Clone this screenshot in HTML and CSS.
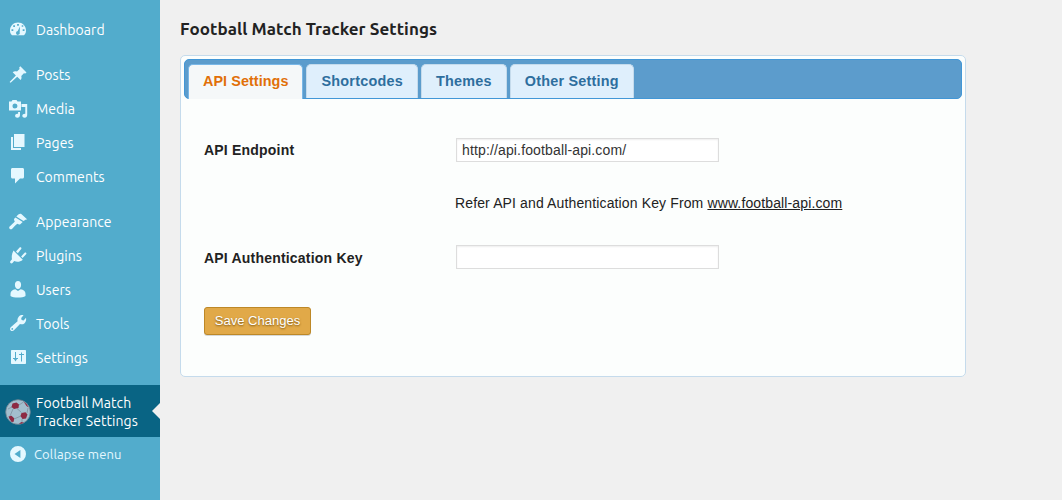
FILE: index.html
```html
<!DOCTYPE html>
<html lang="en">
<head>
  <meta charset="UTF-8" />
  <title>Football Match Tracker Settings</title>
  <link rel="stylesheet" href="styles.css">
</head>
<body>
  <div class="wrapper">
    <nav class="sidebar">
      <ul class="menu">
        <li><a href="#">
          <svg class="icon" viewBox="0 0 20 20"><path fill-rule="evenodd" d="M4 15.2C2.700 14 2 12.500 2 10.500 2 6 5.500 2.500 10 2.500s8 3.500 8 8c0 2-.7 3.500-2 4.700zM9.100 4h1.800v1.800H9.100zM5.200 5.300h1.800v1.800H5.200zM13.700 5.200h1.600v1.600h-1.600zM3.500 9.200h1.800V11H3.500zM14.700 9.200h1.800V11h-1.800zM12 6.600l-.3 5.800a1.900 1.900 0 1 1-2-1.300z"/></svg>
          <span>Dashboard</span></a></li>
        <li class="separator"></li>
        <li><a href="#">
          <svg class="icon" viewBox="0 0 20 20"><path d="M12.300 1.200l6.200 6.200-1.200 1.100-1.400-.3-2.600 2.700c.5 1.700.2 3.200-.7 4.200l-3.400-3.400-6.600 6.100-1-.9 6.300-6.500-3.200-3.200c1.100-1 2.700-1.200 4.300-.7l2.600-2.600-.4-1.500z"/></svg>
          <span>Posts</span></a></li>
        <li><a href="#">
          <svg class="icon" viewBox="0 0 20 20"><path fill-rule="evenodd" d="M1 2.500h2.500L4.500 1h4l1 1.500H13v9H1zM7 4.500a2.500 2.500 0 1 0 0 5 2.500 2.500 0 0 0 0-5z"/><path d="M13.500 5h5.700v11c0 1.500-1 2.700-2.500 2.700-1.400 0-2.400-.8-2.400-2s1.300-2 3-1.900V8h-3.800zM12 13v3c0 1.600-1 2.700-2.600 2.700-1.400 0-2.300-.8-2.300-2 0-1.300 1.200-2.100 3-1.900V13z"/></svg>
          <span>Media</span></a></li>
        <li><a href="#">
          <svg class="icon" viewBox="0 0 20 20"><path d="M6 1h10.500v13H6zM3 4h2v11h8v2H3z"/></svg>
          <span>Pages</span></a></li>
        <li><a href="#">
          <svg class="icon" viewBox="0 0 20 20"><path d="M4.500 1h10c.9 0 1.500.6 1.500 1.500v7.500c0 .9-.6 1.500-1.500 1.500H12l-5 5v-5H4.500C3.600 11.500 3 10.900 3 10V2.500C3 1.600 3.600 1 4.500 1z"/></svg>
          <span>Comments</span></a></li>
        <li class="separator"></li>
        <li><a href="#">
          <svg class="icon" viewBox="0 0 20 20"><path d="M8.300 4.600l2-2.200c1-.5 2.100-.7 3-.4l6 5.500c-1.500-.2-2.500.5-3.800 1.500zM7.500 5.400l7.200 4.500-2.400 2.300c-1 .6-2 0-2.900-.4-1.800 1-3.500 3.500-5.400 5.200-1.500 1-3.500-.6-2.600-2.300 1.700-2 4.200-3.400 5.400-5.300-.8-1.300-1-2-.4-2.800z"/></svg>
          <span>Appearance</span></a></li>
        <li><a href="#">
          <svg class="icon" viewBox="0 0 20 20"><path d="M5.500 4.500l9.300 9.300c-2.600 2.100-5.800 2.700-8.600 1.300L4.500 17c-.5.500-1.500.6-2 0-.6-.6-.5-1.500 0-2L4 13.200c-.6-3 0-6 1.500-8.700zM8 5.500l3.600-4c1-.9 2.500.4 1.600 1.500L9.800 7.200zM13.100 10.500l3.500-3.700c1.200-.9 2.400.5 1.500 1.500l-3.500 3.800z"/></svg>
          <span>Plugins</span></a></li>
        <li><a href="#">
          <svg class="icon" viewBox="0 0 20 20"><path d="M10 1c1.900 0 3.100 1.400 3.100 3.700S11.800 9 10 9 6.900 7 6.900 4.700 8.100 1 10 1zM7.300 9.200L10 11l2.700-1.800c2.800.3 4.800 2 4.800 4.500V16c-1.500 1-4.500 1.500-7.500 1.500S4 17 2.500 16v-2.300c0-2.500 2-4.200 4.800-4.500z"/></svg>
          <span>Users</span></a></li>
        <li><a href="#">
          <svg class="icon" viewBox="0 0 20 20"><path fill-rule="evenodd" d="M15.500 1.200l-2.300 2.900.4 2 2 .5L18 3.800c.5 2-.1 4.300-1.400 5.400-1.400 1.200-3 1.400-4.600.9L6.200 16c-1 1-2.500 1.300-3.500.4s-.8-2.500.3-3.500l6.600-5.700c-.4-1.700 0-3.300 1.300-4.800 1.200-1.200 3-1.500 4.600-1.200zM4.300 14a.9.900 0 1 0 0 1.800.9.900 0 0 0 0-1.800z"/></svg>
          <span>Tools</span></a></li>
        <li><a href="#">
          <svg class="icon" viewBox="0 0 20 20"><path fill-rule="evenodd" d="M4 2h13c.6 0 1 .4 1 1v12c0 .6-.4 1-1 1H4c-.6 0-1-.4-1-1V3c0-.6.4-1 1-1zM7 4v6H5v1h1l1.500 2.500L9 11h1v-1H8V4zM13 4.500V6h-2v1h2v6.500h1V7h2V6h-2V4.500z"/></svg>
          <span>Settings</span></a></li>
        <li class="separator last"></li>
        <li class="current"><a href="#">
          <svg class="ball" viewBox="0 0 26 26">
            <circle cx="13" cy="13" r="12.300" fill="#a3bfce" stroke="#71828f" stroke-width=".8"/>
            <path d="M7 8L3 10M14 6l4.500-3M12 9.500l4.500 4M8 10l-3 7M16 17l-7 3M22 14l1-5M17 20v3" fill="none" stroke="#7d929f" stroke-width=".8"/>
            <path fill="#8d2a43" d="M7.500 4.500l4-1 2.500 2-.5 3.500-4.500.9L6.500 8zM16.500 14l4-.7 2 2.200-1.500 4-3.500.5-2-3zM3.500 17.500l3-.8 2.700 2.500-.5 3.500-2 .3A12 12 0 0 1 3.500 17.500zM18.500 2.500a12 12 0 0 1 5.200 6l-2.200-1.500zM14 24.500l2.500-1.500 2.500.8c-2 1-3.500 1.300-5 .7z"/>
          </svg>
          <span>Football Match<br>Tracker Settings</span></a></li>
        <li class="collapse"><a href="#">
          <svg class="icon" viewBox="0 0 20 20"><path fill-rule="evenodd" d="M10 2a8 8 0 1 1 0 16 8 8 0 0 1 0-16zM12.400 6L6.500 10l5.900 4z"/></svg>
          <span>Collapse menu</span></a></li>
      </ul>
    </nav>

    <main class="content">
      <h2>Football Match Tracker Settings</h2>

      <div class="tabs">
        <ul class="tabs-nav">
          <li class="active"><a href="#">API Settings</a></li>
          <li><a href="#">Shortcodes</a></li>
          <li><a href="#">Themes</a></li>
          <li><a href="#">Other Setting</a></li>
        </ul>

        <form class="tabs-panel">
          <div class="row">
            <label for="endpoint">API Endpoint</label>
            <input type="text" id="endpoint" value="http://api.football-api.com/" />
          </div>
          <p class="note">Refer API and Authentication Key From <a href="#">www.football-api.com</a></p>
          <div class="row">
            <label for="authKey" class="auth">API Authentication Key</label>
            <input type="text" id="authKey" />
          </div>
          <button type="button" class="save">Save Changes</button>
        </form>
      </div>
    </main>
  </div>
</body>
</html>
```
FILE: styles.css
```css
* {
  box-sizing: border-box;
  margin: 0;
  padding: 0;
}

body {
  background: #f0f0f0;
  color: #222;
  font-family: "Liberation Sans", Arial, sans-serif;
  font-size: 14px;
}

ul {
  list-style: none;
}

.wrapper {
  display: flex;
  height: 500px;
}

/* Admin menu */
.sidebar {
  width: 160px;
  padding-top: 13px;
  background: #52accc;
  font-family: Ubuntu, "Noto Sans", sans-serif;
}

.menu a {
  display: flex;
  align-items: center;
  height: 34px;
  padding-left: 8px;
  color: #fff;
  font-size: 14px;
  letter-spacing: 0.05px;
  line-height: 18px;
  text-decoration: none;
  white-space: nowrap;
}

.icon {
  width: 20px;
  height: 20px;
  margin-right: 8px;
  fill: #e5f8ff;
}

.separator {
  height: 11px;
}

.separator.last {
  height: 10px;
}

.menu .current {
  position: relative;
  background: #096484;
}

.menu .current a {
  height: 52px;
  padding: 1px 0 0 5px;
}

.current::after {
  content: "";
  position: absolute;
  top: 18px;
  right: 0;
  border: 8px solid transparent;
  border-left: 0;
  border-right-color: #f0f0f0;
}

.ball {
  width: 26px;
  height: 26px;
  margin-right: 5px;
}

.menu .collapse a {
  color: #e5f8ff;
  font-size: 13px;
  letter-spacing: 0.15px;
}

.collapse .icon {
  margin-right: 6px;
}

/* Settings page */
.content {
  padding: 17px 0 0 20px;
}

h2 {
  height: 38px;
  font-family: Ubuntu, "Noto Sans", sans-serif;
  font-size: 17px;
  font-weight: 700;
  letter-spacing: 0.07px;
  line-height: 24px;
}

.tabs {
  width: 786px;
  height: 322px;
  padding: 3px;
  background: #fcfefd;
  border: 1px solid #c5dbec;
  border-radius: 5px;
}

.tabs-nav {
  display: flex;
  align-items: flex-end;
  gap: 3px;
  height: 40px;
  padding-left: 3px;
  background: #5c9ccc;
  border: 1px solid #4297d7;
  border-radius: 5px;
}

.tabs-nav li {
  height: 34px;
  padding: 0 14px;
  background: #dfeffc;
  border: 1px solid #c5dbec;
  border-bottom: 0;
  border-radius: 5px 5px 0 0;
  line-height: 32px;
}

.tabs-nav .active {
  height: 35px;
  margin-bottom: -1px;
  background: #f5f8f9;
  border-color: #79b7e7;
}

.tabs-nav a {
  color: #2e6e9e;
  font-size: 14.4px;
  font-weight: bold;
  letter-spacing: 0.23px;
  text-decoration: none;
}

.tabs-nav .active a {
  color: #e17009;
  letter-spacing: 0.06px;
}

.tabs-panel {
  padding: 39px 20px 0;
}

.row {
  display: flex;
  align-items: center;
}

.row label {
  width: 252px;
  font-weight: bold;
  letter-spacing: 0.2px;
}

.row .auth {
  padding-top: 2px;
}

.row input {
  width: 263px;
  height: 24px;
  padding: 0 5px;
  background: #fff;
  border: 1px solid #ddd;
  box-shadow: inset 0 1px 2px rgba(0, 0, 0, 0.07);
  color: #333;
  font-family: inherit;
  font-size: 14px;
  letter-spacing: 0.14px;
}

.note {
  margin: 33px 0 34px 251px;
  letter-spacing: 0.13px;
  line-height: 16px;
}

.note a {
  color: #222;
}

.save {
  display: block;
  width: 107px;
  height: 28px;
  margin-top: 38px;
  padding-bottom: 1px;
  background: #e1a948;
  border: 1px solid #bd8827;
  border-radius: 3px;
  box-shadow: 0 1px 0 rgba(0, 0, 0, 0.15);
  color: #fff;
  font-family: inherit;
  font-size: 13px;
  text-shadow: 0 1px 2px #7b5410;
}
```
